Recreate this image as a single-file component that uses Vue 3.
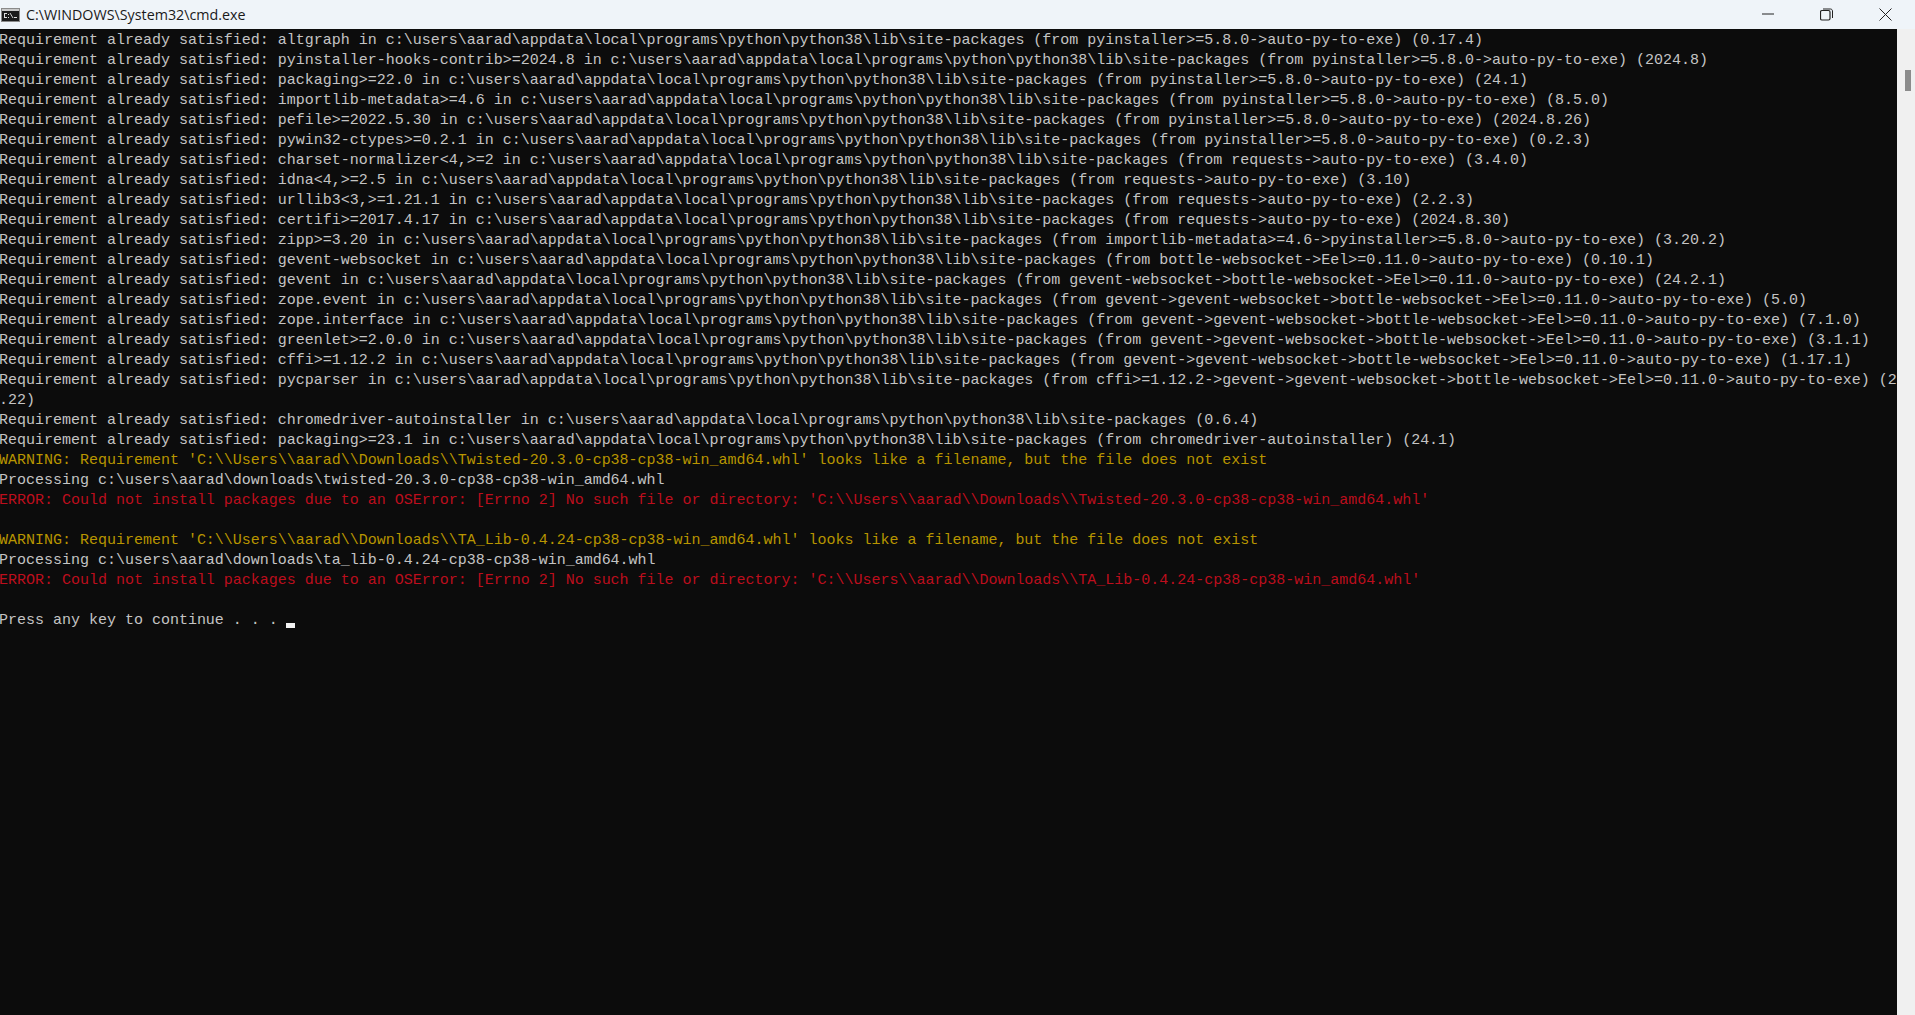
<script setup>
const R = 'Requirement already satisfied: '
const P = 'c:\\users\\aarad\\appdata\\local\\programs\\python\\python38\\lib\\site-packages'
const lines = [
  ['t', R + 'altgraph in ' + P + ' (from pyinstaller>=5.8.0->auto-py-to-exe) (0.17.4)'],
  ['t', R + 'pyinstaller-hooks-contrib>=2024.8 in ' + P + ' (from pyinstaller>=5.8.0->auto-py-to-exe) (2024.8)'],
  ['t', R + 'packaging>=22.0 in ' + P + ' (from pyinstaller>=5.8.0->auto-py-to-exe) (24.1)'],
  ['t', R + 'importlib-metadata>=4.6 in ' + P + ' (from pyinstaller>=5.8.0->auto-py-to-exe) (8.5.0)'],
  ['t', R + 'pefile>=2022.5.30 in ' + P + ' (from pyinstaller>=5.8.0->auto-py-to-exe) (2024.8.26)'],
  ['t', R + 'pywin32-ctypes>=0.2.1 in ' + P + ' (from pyinstaller>=5.8.0->auto-py-to-exe) (0.2.3)'],
  ['t', R + 'charset-normalizer<4,>=2 in ' + P + ' (from requests->auto-py-to-exe) (3.4.0)'],
  ['t', R + 'idna<4,>=2.5 in ' + P + ' (from requests->auto-py-to-exe) (3.10)'],
  ['t', R + 'urllib3<3,>=1.21.1 in ' + P + ' (from requests->auto-py-to-exe) (2.2.3)'],
  ['t', R + 'certifi>=2017.4.17 in ' + P + ' (from requests->auto-py-to-exe) (2024.8.30)'],
  ['t', R + 'zipp>=3.20 in ' + P + ' (from importlib-metadata>=4.6->pyinstaller>=5.8.0->auto-py-to-exe) (3.20.2)'],
  ['t', R + 'gevent-websocket in ' + P + ' (from bottle-websocket->Eel>=0.11.0->auto-py-to-exe) (0.10.1)'],
  ['t', R + 'gevent in ' + P + ' (from gevent-websocket->bottle-websocket->Eel>=0.11.0->auto-py-to-exe) (24.2.1)'],
  ['t', R + 'zope.event in ' + P + ' (from gevent->gevent-websocket->bottle-websocket->Eel>=0.11.0->auto-py-to-exe) (5.0)'],
  ['t', R + 'zope.interface in ' + P + ' (from gevent->gevent-websocket->bottle-websocket->Eel>=0.11.0->auto-py-to-exe) (7.1.0)'],
  ['t', R + 'greenlet>=2.0.0 in ' + P + ' (from gevent->gevent-websocket->bottle-websocket->Eel>=0.11.0->auto-py-to-exe) (3.1.1)'],
  ['t', R + 'cffi>=1.12.2 in ' + P + ' (from gevent->gevent-websocket->bottle-websocket->Eel>=0.11.0->auto-py-to-exe) (1.17.1)'],
  ['t', R + 'pycparser in ' + P + ' (from cffi>=1.12.2->gevent->gevent-websocket->bottle-websocket->Eel>=0.11.0->auto-py-to-exe) (2'],
  ['t', '.22)'],
  ['t', R + 'chromedriver-autoinstaller in ' + P + ' (0.6.4)'],
  ['t', R + 'packaging>=23.1 in ' + P + ' (from chromedriver-autoinstaller) (24.1)'],
  ['w', "WARNING: Requirement 'C:\\\\Users\\\\aarad\\\\Downloads\\\\Twisted-20.3.0-cp38-cp38-win_amd64.whl' looks like a filename, but the file does not exist"],
  ['t', 'Processing c:\\users\\aarad\\downloads\\twisted-20.3.0-cp38-cp38-win_amd64.whl'],
  ['e', "ERROR: Could not install packages due to an OSError: [Errno 2] No such file or directory: 'C:\\\\Users\\\\aarad\\\\Downloads\\\\Twisted-20.3.0-cp38-cp38-win_amd64.whl'"],
  ['t', ' '],
  ['w', "WARNING: Requirement 'C:\\\\Users\\\\aarad\\\\Downloads\\\\TA_Lib-0.4.24-cp38-cp38-win_amd64.whl' looks like a filename, but the file does not exist"],
  ['t', 'Processing c:\\users\\aarad\\downloads\\ta_lib-0.4.24-cp38-cp38-win_amd64.whl'],
  ['e', "ERROR: Could not install packages due to an OSError: [Errno 2] No such file or directory: 'C:\\\\Users\\\\aarad\\\\Downloads\\\\TA_Lib-0.4.24-cp38-cp38-win_amd64.whl'"],
  ['t', ' '],
]
</script>

<template>
  <div class="window">
    <header class="titlebar">
      <svg class="appicon" width="19" height="14" viewBox="0 0 19 14">
        <rect x="0" y="0" width="19" height="14" fill="#8a8a8a" />
        <rect x="1" y="1" width="17" height="2" fill="#c9c9c9" />
        <rect x="1" y="3" width="17" height="10" fill="#1c1c1c" />
        <rect x="3" y="5" width="3" height="5" fill="#e0e0e0" />
        <rect x="4" y="6" width="2" height="3" fill="#1c1c1c" />
        <rect x="7" y="6" width="1" height="1" fill="#e0e0e0" />
        <rect x="7" y="9" width="1" height="1" fill="#e0e0e0" />
        <path d="M9 5L12 10" stroke="#d0d0d0" stroke-width="1" />
        <rect x="13" y="9" width="3" height="1" fill="#e0e0e0" />
      </svg>
      <span class="title">C:\WINDOWS\System32\cmd.exe</span>
      <div class="controls">
        <svg class="ctl" width="12" height="12" viewBox="0 0 12 12"><path d="M0 6H12" stroke="#222" stroke-width="1" /></svg>
        <svg class="ctl" width="13" height="13" viewBox="0 0 13 13" fill="none" stroke="#222"><rect x="0.5" y="2.5" width="9.5" height="9.5" rx="1.5" stroke-width="1.2" /><path d="M3 1H10.5C11.6 1 12.5 1.9 12.5 3V10" stroke-width="1" /></svg>
        <svg class="ctl" width="13" height="13" viewBox="0 0 13 13"><path d="M0.5 0.5L12.5 12.5M12.5 0.5L0.5 12.5" stroke="#222" stroke-width="1" /></svg>
      </div>
    </header>
    <div class="body">
      <main class="console">
        <div v-for="(l, i) in lines" :key="i" class="line" :class="l[0]">{{ l[1] }}</div>
        <div class="line t">Press any key to continue . . . <span class="cursor"></span></div>
      </main>
      <aside class="scrollbar"><div class="thumb"></div></aside>
    </div>
  </div>
</template>

<style scoped>
.window { width: 1915px; height: 1015px; display: flex; flex-direction: column; overflow: hidden; background: #0c0c0c; }
.titlebar { height: 29px; flex: none; display: flex; align-items: center; padding-left: 1px; background: #eff4f9; }
.appicon { flex: none; }
.title { margin-left: 6px; font-family: "Open Sans", sans-serif; font-size: 14.3px; color: #1a1a1a; white-space: pre; }
.controls { margin-left: auto; display: flex; align-items: center; gap: 46px; padding: 0 23px 1px 0; }
.ctl { flex: none; }
.body { flex: 1; display: flex; min-height: 0; }
.console { flex: 1; min-width: 0; overflow: hidden; padding-top: 2px; margin-left: -1px; font-family: "Liberation Mono", monospace; font-size: 15px; letter-spacing: -0.007px; line-height: 20px; }
.line { height: 20px; white-space: pre; }
.t { color: #c4c4c4; }
.w { color: #b89500; }
.e { color: #bd0e1d; }
.cursor { display: inline-block; width: 9px; height: 5px; margin-left: -1px; background: #f2f2f2; vertical-align: -4px; }
.scrollbar { width: 18px; flex: none; background: #f0f0f0; padding: 41px 4px 0 8px; box-sizing: border-box; }
.thumb { width: 6px; height: 21px; background: #8b8b8b; }
</style>
